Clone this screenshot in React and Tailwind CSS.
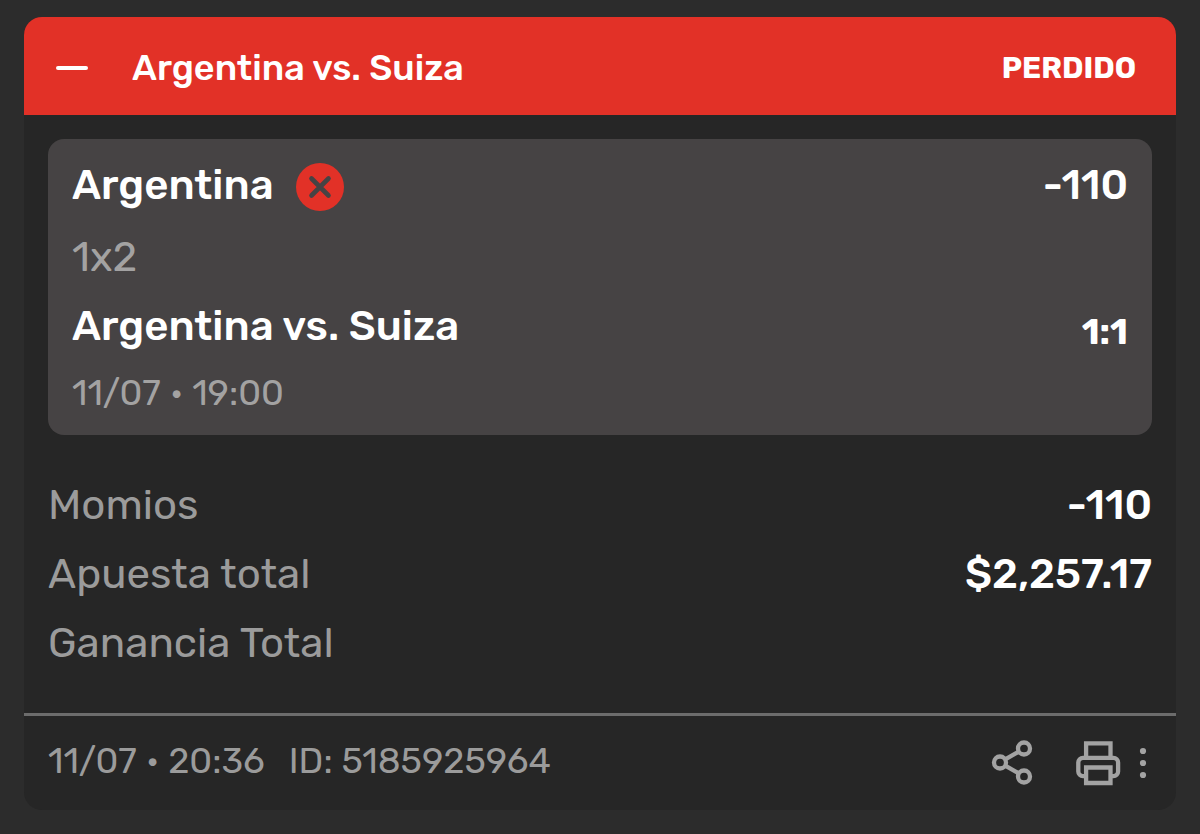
const totals = [
  { label: 'Momios', value: '-110' },
  { label: 'Apuesta total', value: '$2,257.17' },
  { label: 'Ganancia Total', value: '' },
];

function LostIcon() {
  return (
    <svg className="size-12 shrink-0" viewBox="0 0 48 48" role="img" aria-label="Perdido">
      <circle cx="24" cy="24" r="24" fill="#e23127" />
      <path d="M15.5 15.5l17 17M32.5 15.5l-17 17" stroke="#464344" strokeWidth="4.6" strokeLinecap="round" />
    </svg>
  );
}

function ShareIcon() {
  return (
    <svg className="h-12 w-11" viewBox="0 0 44 48" fill="none" stroke="#a3a3a3" strokeWidth="4.3" aria-hidden="true">
      <path d="M15.2 20.4l13.2-7.6M15.2 26.6l13.2 7.6" />
      <circle cx="10" cy="23.5" r="6" />
      <circle cx="34" cy="9.5" r="6" />
      <circle cx="34" cy="37.5" r="6" />
    </svg>
  );
}

function PrintIcon() {
  return (
    <svg className="h-12 w-12" viewBox="0 0 48 48" fill="none" stroke="#a3a3a3" strokeWidth="4.3" aria-hidden="true">
      <path d="M12.1 19V4.3h24.4V19" />
      <path d="M12.1 37.2H9a4.7 4.7 0 0 1-4.7-4.7v-9A4.7 4.7 0 0 1 9 18.8h30.4a4.7 4.7 0 0 1 4.7 4.7v9a4.7 4.7 0 0 1-4.7 4.7h-2.9" />
      <path d="M12.1 28.5h24.4V44H12.1z" />
    </svg>
  );
}

function MoreIcon() {
  return (
    <svg className="h-12 w-2" viewBox="0 0 8 48" fill="#a3a3a3" aria-hidden="true">
      <circle cx="4" cy="12" r="3.1" />
      <circle cx="4" cy="24" r="3.1" />
      <circle cx="4" cy="36" r="3.1" />
    </svg>
  );
}

export default function App() {
  return (
    <main className="min-h-screen bg-[#2c2c2c] px-6 pt-[17px] pb-6 font-['Rubik','Roboto',sans-serif] text-white">
      <article className="overflow-hidden rounded-[18px] bg-[#262626]">
        <header className="flex h-[98px] items-center bg-[#e23127] pt-1 pr-10 pl-8">
          <button type="button" aria-label="Contraer" className="flex h-12 w-8 items-center">
            <span className="h-1 w-full rounded-full bg-white" />
          </button>
          <h1 className="ml-11 text-[36px] leading-[44px] font-medium">Argentina vs. Suiza</h1>
          <span className="ml-auto text-[30px] leading-9 font-bold">PERDIDO</span>
        </header>

        <div className="px-6 pt-6 pb-[35px]">
          <section className="flex flex-col gap-[21px] rounded-[16px] bg-[#464344] px-6 pt-6 pb-5">
            <div className="flex h-[49px] items-start justify-between text-[42px] leading-[44px] font-medium">
              <div className="flex items-start gap-[22px]">
                <h2>Argentina</h2>
                <LostIcon />
              </div>
              <span>-110</span>
            </div>
            <p className="text-[42px] leading-[48px] text-[#a3a2a2]">1x2</p>
            <div className="flex items-end justify-between">
              <h3 className="text-[42px] leading-[48px] font-medium">Argentina vs. Suiza</h3>
              <span className="text-[36px] leading-9 font-bold">1:1</span>
            </div>
            <p className="text-[36px] leading-[44px] text-[#a3a2a2]">11/07 • 19:00</p>
          </section>

          <dl className="pt-9 text-[42px] leading-[69px]">
            {totals.map(({ label, value }) => (
              <div key={label} className="flex justify-between">
                <dt className="text-[#9b9b9b]">{label}</dt>
                <dd className="font-medium">{value}</dd>
              </div>
            ))}
          </dl>
        </div>

        <footer className="flex h-[97px] items-center justify-between border-t-3 border-[#6c6c6c] pr-[29px] pl-6 text-[36px] leading-[44px] text-[#9b9b9b]">
          <p className="flex gap-6 pb-1">
            <span>11/07 • 20:36</span>
            <span>ID: 5185925964</span>
          </p>
          <div className="flex items-center">
            <button type="button" aria-label="Compartir"><ShareIcon /></button>
            <button type="button" aria-label="Imprimir" className="ml-10"><PrintIcon /></button>
            <button type="button" aria-label="Más opciones" className="ml-[17px]"><MoreIcon /></button>
          </div>
        </footer>
      </article>
    </main>
  );
}
